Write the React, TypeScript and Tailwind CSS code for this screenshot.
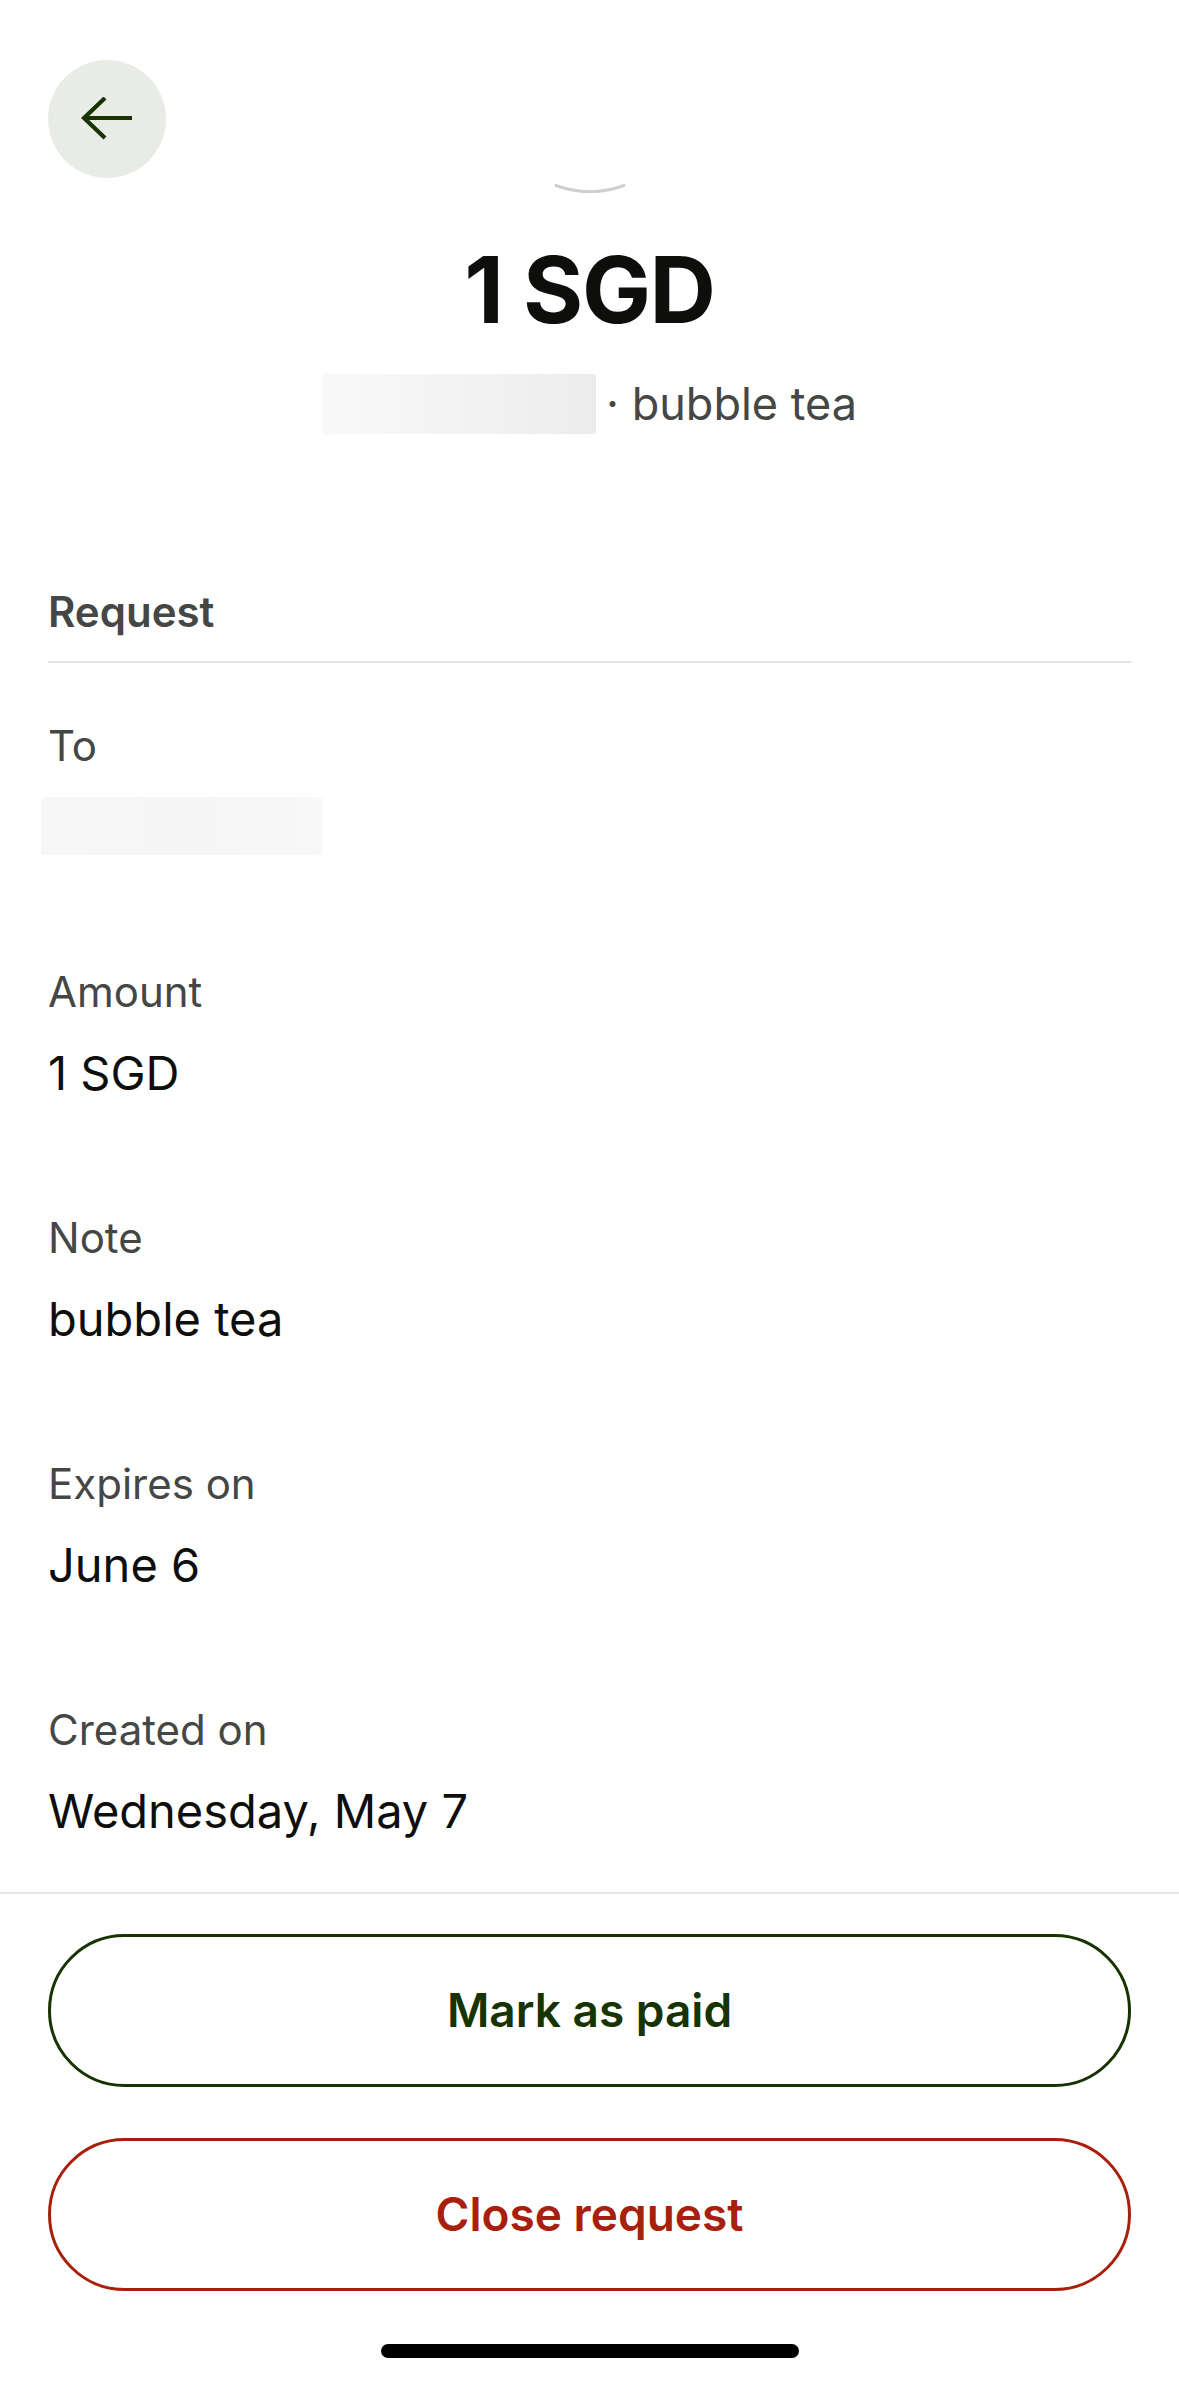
import React from 'react'

const rows = [
  { label: 'Amount', value: '1 SGD' },
  { label: 'Note', value: 'bubble tea' },
  { label: 'Expires on', value: 'June 6' },
  { label: 'Created on', value: 'Wednesday, May 7' },
]

function Redacted({ className }: { className: string }) {
  return <div className={`rounded-[2px] ${className}`} />
}

export default function App() {
  return (
    <div
      className="flex h-[2396px] w-[1179px] flex-col overflow-hidden bg-white text-[#0e0f0c]"
      style={{ fontFamily: 'Inter, "Noto Sans", "Liberation Sans", sans-serif' }}
    >
      {/* header */}
      <div className="pl-[48px] pt-[60px]">
        <button className="flex h-[118px] w-[118px] items-center justify-center rounded-full bg-[#e8ebe6]">
          <svg width="52" height="44" viewBox="0 0 52 44" fill="none" stroke="#163300" strokeWidth="4.2">
            <path d="M2 21H51" />
            <path d="M24 1L3 21L24 41" />
          </svg>
        </button>
      </div>

      <div className="mt-[6px] flex justify-center">
        <svg width="72" height="9" viewBox="0 0 72 9" fill="none">
          <path d="M2 1.5Q36 14 70 1.5" stroke="#cfd0ce" strokeWidth="3" strokeLinecap="round" />
        </svg>
      </div>

      <div className="mt-[51px] text-center text-[92px] font-bold leading-[92px] tracking-[-0.015em]">1 SGD</div>

      <div className="mt-[38px] flex items-center justify-center">
        <Redacted className="h-[60px] w-[274px] bg-gradient-to-r from-[#f9f9f9] via-[#f3f3f3] to-[#ececec]" />
        <span className="ml-[10px] text-[45px] leading-[54px] text-[#454745]">· bubble tea</span>
      </div>

      {/* details */}
      <div className="mt-[153px] px-[48px]">
        <div className="border-b-2 border-[#e2e3e1] pb-[24px] text-[42px] font-semibold leading-[50px] text-[#454745]">
          Request
        </div>

        <div className="mt-[58px] flex flex-col gap-[112px] pb-[53px]">
          <div className="flex flex-col">
            <div className="text-[42px] leading-[50px] text-[#454745]">To</div>
            <Redacted className="-ml-[7px] mt-[26px] h-[58px] w-[282px] bg-gradient-to-r from-[#f7f7f7] via-[#f5f5f5] to-[#f8f8f8]" />
          </div>
          {rows.map((r) => (
            <div key={r.label} className="flex flex-col">
              <div className="text-[42px] leading-[50px] text-[#454745]">{r.label}</div>
              <div className="mt-[28px] text-[47px] leading-[56px] text-[#0e0f0c]">{r.value}</div>
            </div>
          ))}
        </div>
      </div>

      {/* actions */}
      <div className="flex flex-col items-center border-t-2 border-[#e6e7e5] pt-[40px]">
        <div className="flex w-full flex-col gap-[51px] px-[48px]">
          <button className="flex h-[153px] w-full items-center justify-center rounded-full border-[3px] border-[#163300] text-[46px] font-semibold text-[#163300]">
            Mark as paid
          </button>
          <button className="flex h-[153px] w-full items-center justify-center rounded-full border-[3px] border-[#a8200d] text-[46px] font-semibold text-[#a8200d]">
            Close request
          </button>
        </div>
        <div className="mt-[53px] h-[14px] w-[418px] rounded-full bg-black" />
      </div>
    </div>
  )
}
